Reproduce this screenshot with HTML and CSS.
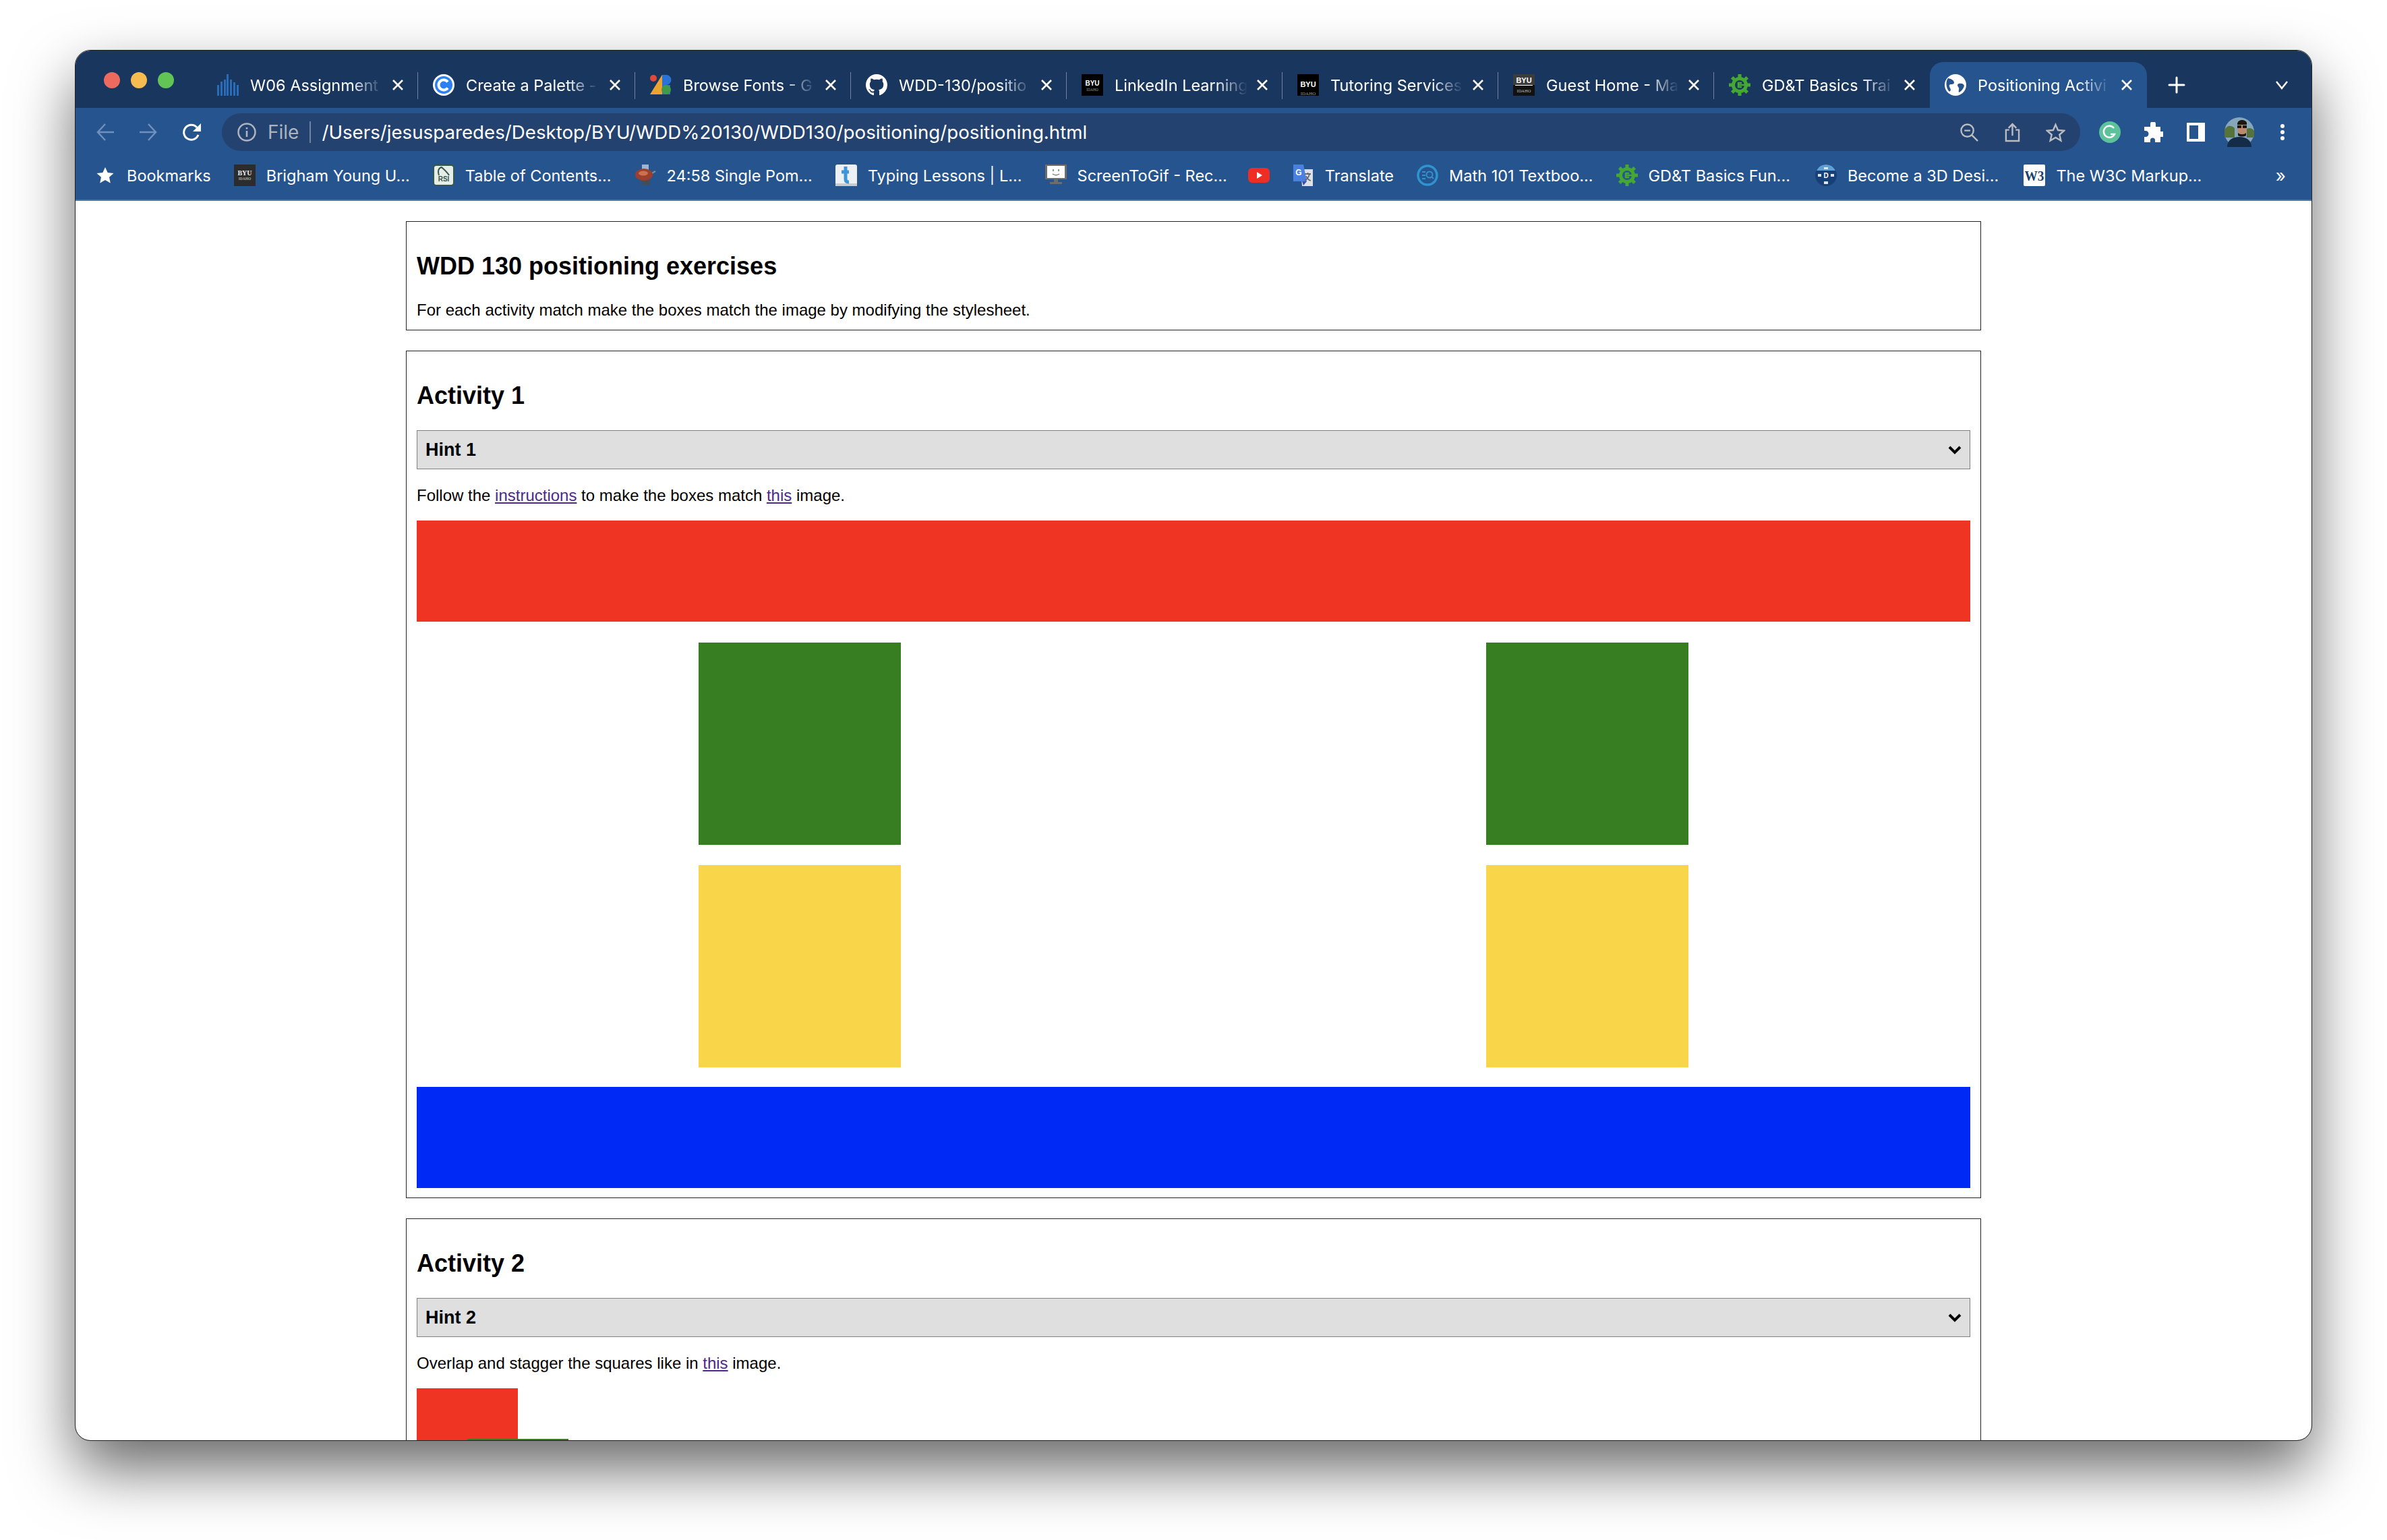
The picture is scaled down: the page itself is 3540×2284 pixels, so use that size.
FILE: index.html
```html
<!DOCTYPE html>
<html lang="en">
<head>
  <meta charset="UTF-8">
  <title>Positioning Activities</title>
  <link rel="stylesheet" href="styles.css">
</head>
<body>
  <svg class="defs" width="0" height="0">
    <symbol id="gear" viewBox="0 0 32 32">
      <path fill="#45a832" fill-rule="evenodd" d="M16 4a12 12 0 1 0 0 24 12 12 0 0 0 0-24zm0 5a7 7 0 1 1 0 14 7 7 0 0 1 0-14z"/>
      <path stroke="#45a832" stroke-width="5" d="M16 0v6M16 26v6M0 16h6M26 16h6M4.700 4.700l4 4M23.300 23.300l4 4M4.700 27.300l4-4M23.300 8.700l4-4"/>
      <path fill="none" stroke="#45a832" stroke-width="2.500" d="M19 13h-5v6h5M14 16h13"/>
    </symbol>
    <symbol id="close" viewBox="0 0 16 16">
      <path fill="none" stroke="#fff" stroke-width="2.600" d="M1 1l14 14M15 1 1 15"/>
    </symbol>
  </svg>

  <div class="window">

    <!-- tab strip -->
    <div class="tabstrip">
      <div class="lights">
        <span class="light red"></span>
        <span class="light yellow"></span>
        <span class="light green"></span>
      </div>
      <div class="tab">
        <svg class="fav" viewBox="0 0 32 32"><path fill="#2b6cb8" d="M0 16h3v16H0zM5 11h3v21H5zM10 8h3v24h-3zM14 0h3v32h-3zM19 8h3v24h-3zM24 12h3v20h-3zM29 16h3v16h-3z"/></svg>
        <span class="tab-title">W06 Assignment</span>
        <svg class="tab-x"><use href="#close"/></svg>
      </div>
      <div class="tab tab-wide">
        <svg class="fav" viewBox="0 0 32 32"><circle cx="16" cy="16" r="16" fill="#fff"/><circle cx="16" cy="16" r="13" fill="#2a80f4"/><path fill="none" stroke="#fff" stroke-width="4" d="M22 11.500a7.500 7.500 0 1 0 0 9"/></svg>
        <span class="tab-title">Create a Palette -</span>
        <svg class="tab-x"><use href="#close"/></svg>
      </div>
      <div class="tab">
        <svg class="fav" viewBox="0 0 32 32"><circle cx="5" cy="6" r="5" fill="#e0483c"/><path fill="#eda331" d="M0 30 18 1v29z"/><path fill="#2a72d8" d="M18 1h6a7.500 7.500 0 0 1 0 15h6v14H18z"/><circle cx="24" cy="23" r="7" fill="#3f9a4a"/></svg>
        <span class="tab-title">Browse Fonts - G</span>
        <svg class="tab-x"><use href="#close"/></svg>
      </div>
      <div class="tab">
        <svg class="fav" viewBox="0 0 16 16"><path fill="#fff" d="M8 0C3.580 0 0 3.580 0 8c0 3.540 2.290 6.530 5.470 7.590.4.070.55-.17.55-.38 0-.19-.01-.82-.01-1.490-2.010.370-2.530-.49-2.690-.94-.09-.23-.48-.94-.82-1.130-.28-.15-.68-.52-.01-.53.630-.01 1.080.58 1.230.82.720 1.210 1.870.870 2.330.660.070-.52.280-.87.510-1.070-1.780-.2-3.640-.89-3.640-3.950 0-.87.310-1.590.820-2.150-.08-.2-.36-1.020.08-2.120 0 0 .67-.21 2.200.820.640-.18 1.320-.27 2-.27s1.360.09 2 .27c1.530-1.040 2.200-.82 2.200-.82.440 1.100.16 1.920.08 2.120.51.560.82 1.270.82 2.150 0 3.070-1.870 3.750-3.650 3.950.29.250.54.730.54 1.480 0 1.070-.01 1.930-.01 2.200 0 .21.150.46.550.38A8.010 8.010 0 0 0 16 8c0-4.420-3.580-8-8-8z"/></svg>
        <span class="tab-title">WDD-130/positio</span>
        <svg class="tab-x"><use href="#close"/></svg>
      </div>
      <div class="tab">
        <svg class="fav" viewBox="0 0 32 32"><rect width="32" height="32" fill="#000"/><text class="fav-bold" x="16" y="17" font-size="10">BYU</text><text class="fav-thin" x="16" y="25" font-size="5.500" fill="#999">IDAHO</text></svg>
        <span class="tab-title">LinkedIn Learning</span>
        <svg class="tab-x"><use href="#close"/></svg>
      </div>
      <div class="tab">
        <svg class="fav" viewBox="0 0 32 32"><rect width="32" height="32" fill="#000"/><text class="fav-bold" x="16" y="19" font-size="11">BYU</text><text class="fav-thin" x="16" y="31" font-size="7" fill="#999">IDAHO</text></svg>
        <span class="tab-title">Tutoring Services</span>
        <svg class="tab-x"><use href="#close"/></svg>
      </div>
      <div class="tab">
        <svg class="fav" viewBox="0 0 32 32"><rect width="32" height="32" fill="#111"/><rect width="32" height="16" fill="#3c3c3c"/><text class="fav-bold" x="16" y="13" font-size="11">BYU</text><rect x="3" y="16" width="26" height="1" fill="#fff"/><text class="fav-thin" x="16" y="27" font-size="6.500" fill="#bbb">IDAHO</text></svg>
        <span class="tab-title">Guest Home - Ma</span>
        <svg class="tab-x"><use href="#close"/></svg>
      </div>
      <div class="tab">
        <svg class="fav" viewBox="0 0 32 32"><use href="#gear"/></svg>
        <span class="tab-title">GD&amp;T Basics Trai</span>
        <svg class="tab-x"><use href="#close"/></svg>
      </div>
      <div class="tab tab-active">
        <svg class="fav" viewBox="0 0 32 32"><circle cx="16" cy="16" r="16" fill="#fff"/><path fill="#25548f" d="M5 6c5 1 9 3 9 7-1 3-5 1-7 3-1 3 2 4 2 8l-2 2C2 21 1 11 5 6zM21 14c4-1 7 0 8 3-1 5-5 9-8 10-1-3 1-5 0-7-2-2-3-5 0-6z"/></svg>
        <span class="tab-title">Positioning Activi</span>
        <svg class="tab-x"><use href="#close"/></svg>
      </div>
      <svg class="newtab" viewBox="0 0 26 26"><path fill="none" stroke="#fff" stroke-width="3" stroke-linecap="round" d="M13 2v22M2 13h22"/></svg>
      <svg class="tabmenu" viewBox="0 0 20 14"><path fill="none" stroke="#fff" stroke-width="2.500" d="M2 2l8 10 8-10"/></svg>
    </div>

    <!-- toolbar -->
    <div class="toolbar">
      <svg class="nav-ico" viewBox="0 0 26 26"><path fill="none" stroke="#6f8fbd" stroke-width="2.500" d="M26 13H2M13 1 2 13l11 12"/></svg>
      <svg class="nav-ico" viewBox="0 0 26 26"><path fill="none" stroke="#6f8fbd" stroke-width="2.500" d="M0 13h24M13 1l11 12-11 12"/></svg>
      <svg class="nav-ico reload" viewBox="0 0 28 28"><path fill="none" stroke="#fff" stroke-width="3" d="M23 18a11 11 0 1 1-2-11"/><path fill="#fff" d="M27 1v12H15z"/></svg>
      <div class="omnibox">
        <svg class="info" viewBox="0 0 28 28"><circle cx="14" cy="14" r="12.500" fill="none" stroke="#adb4bf" stroke-width="2.500"/><path fill="#adb4bf" d="M12.700 12h2.600v9h-2.600zM12.700 7h2.600v2.600h-2.600z"/></svg>
        <span class="scheme">File</span>
        <span class="omni-sep"></span>
        <span class="url">/Users/jesusparedes/Desktop/BYU/WDD%20130/WDD130/positioning/positioning.html</span>
        <svg class="zoomout" viewBox="0 0 28 28"><circle cx="11" cy="11" r="9.500" fill="none" stroke="#b9bdc2" stroke-width="2.500"/><path stroke="#b9bdc2" stroke-width="2.500" fill="none" d="M6.500 11h9M18 18l9 9"/></svg>
        <svg class="share" viewBox="0 0 24 30"><path fill="none" stroke="#b9bdc2" stroke-width="2.500" d="M7 11H2v17h20V11h-5M12 20V2M6 8l6-6 6 6"/></svg>
        <svg class="star" viewBox="0 0 30 30"><path fill="none" stroke="#b9bdc2" stroke-width="2.500" d="M15 3l3.700 8.400 9.300.9-7 6.100 2.100 9L15 22.700 6.900 27.400 9 18.400 2 12.300l9.300-.9z"/></svg>
      </div>
      <svg class="ext-grammarly" viewBox="0 0 32 32"><circle cx="16" cy="16" r="16" fill="#5dc29a"/><path fill="none" stroke="#fff" stroke-width="2.500" d="M22 10a8.500 8.500 0 1 0 1 9h-6"/></svg>
      <svg class="ext-puzzle" viewBox="0 0 30 30"><path fill="#fff" d="M11 3a4 4 0 0 1 8 0v4h7v7h3a4 4 0 0 1 0 8h-3v8H18v-3a3.500 3.500 0 0 0-7 0v3H2v-8h2a4.500 4.500 0 0 0 0-9H2V7h9z"/></svg>
      <div class="ext-panel"></div>
      <svg class="avatar" viewBox="0 0 44 44">
        <circle cx="22" cy="22" r="22" fill="#86a6bb"/>
        <path fill="#56733c" d="M0 18c5-7 10-6 15-2l0 14H0zM33 17c4-2 8-1 11 3v10H33z"/>
        <path fill="#152c48" d="M4 44c0-10 8-15 18-15s18 5 18 15z"/>
        <ellipse cx="26" cy="18" rx="7" ry="10" fill="#b98c70"/>
        <path fill="#1d1712" d="M19 11c0-5 3-7 7-7s8 2 7 7zM19 12h6v4h-6zM27 12h6v4h-6zM20 23c3 3 9 3 12 0v4c-3 2-9 2-12 0z"/>
      </svg>
      <svg class="menu-dots" viewBox="0 0 10 26"><circle cx="5" cy="4" r="3" fill="#fff"/><circle cx="5" cy="13" r="3" fill="#fff"/><circle cx="5" cy="22" r="3" fill="#fff"/></svg>
    </div>

    <!-- bookmarks -->
    <div class="bookmarks">
      <span class="bm">
        <svg class="bm-star" viewBox="0 0 26 26"><path fill="#fff" d="M13 1l3.700 8 8.800.9-6.500 5.900 1.800 8.700L13 20.100 5.200 24.500 7 15.800.5 9.900 9.300 9z"/></svg>
        Bookmarks
      </span>
      <span class="bm">
        <svg class="fav" viewBox="0 0 32 32"><rect width="32" height="32" fill="#2c2c2c"/><text class="fav-serif" x="16" y="16" font-size="10" fill="#eee">BYU</text><text class="fav-serif" x="16" y="23" font-size="5.500" fill="#aaa">IDAHO</text></svg>
        Brigham Young U...
      </span>
      <span class="bm">
        <svg class="fav" viewBox="0 0 32 32"><rect x="1" y="1" width="30" height="30" rx="4" fill="#e6ece8" stroke="#35574c" stroke-width="2"/><path fill="none" stroke="#35574c" stroke-width="2" d="M9 16C7 10 8 5 13 4c3 3 8 7 11 12"/><text class="fav-bold fav-rsi" x="16" y="25" font-size="10">RSI</text></svg>
        Table of Contents...
      </span>
      <span class="bm">
        <svg class="fav" viewBox="0 0 32 32"><rect x="11" y="0" width="10" height="9" fill="#9db4d2"/><path stroke="#7d8a99" stroke-width="2.500" d="M24 14l7-4"/><rect x="10" y="22" width="13" height="8" fill="#444c58"/><ellipse cx="14" cy="15" rx="13" ry="9" fill="#9c3f2c"/><ellipse cx="13" cy="13" rx="7" ry="3.500" fill="#c9724f"/></svg>
        24:58 Single Pom...
      </span>
      <span class="bm">
        <svg class="fav" viewBox="0 0 32 32"><rect width="32" height="32" rx="3" fill="#eef1f3"/><rect y="28" width="32" height="4" fill="#c7cbce"/><path fill="none" stroke="#3e95d8" stroke-width="5" d="M15 3v19c0 3 2 4 5 4M9 11h11"/></svg>
        Typing Lessons | L...
      </span>
      <span class="bm">
        <svg class="fav" viewBox="0 0 32 32"><rect width="32" height="22" fill="#6d6d6d"/><rect x="3" y="2" width="26" height="18" fill="#fff"/><rect x="13" y="22" width="6" height="5" fill="#6d6d6d"/><rect x="7" y="26" width="18" height="3" fill="#6d6d6d"/><path fill="none" stroke="#777" stroke-width="1.500" d="M12 7v3M20 7v3M11 14c3 2 7 2 10 0"/></svg>
        ScreenToGif - Rec...
      </span>
      <span class="bm bm-yt">
        <svg class="fav" viewBox="0 0 32 32"><rect y="5" width="32" height="22" rx="6" fill="#ee2d24"/><path fill="#fff" d="M13 11l8 5-8 5z"/></svg>
      </span>
      <span class="bm">
        <svg class="fav" viewBox="0 0 32 32"><path fill="#dfe2e5" d="M12 7h18v25H14z"/><path fill="#4a80e0" d="M1 0h15l5 25H1z"/><path fill="#3a4fb0" d="M14 25h7l-5 6z"/><text class="fav-bold" x="9" y="16" font-size="12">G</text><path fill="none" stroke="#667" stroke-width="1.800" d="M18 14h9M22.500 12v2M25 14c-1 5-4 8-7 10M20 17c1 3 4 6 7 7"/></svg>
        Translate
      </span>
      <span class="bm">
        <svg class="fav" viewBox="0 0 32 32"><circle cx="16" cy="16" r="14" fill="none" stroke="#2f93cf" stroke-width="3.500"/><path fill="none" stroke="#2f93cf" stroke-width="2" d="M8 11h5M8 16h5M8 21h5"/><circle cx="19" cy="15" r="4.500" fill="none" stroke="#2f93cf" stroke-width="2"/><path stroke="#2f93cf" stroke-width="2" d="M22 18l3 3"/></svg>
        Math 101 Textboo...
      </span>
      <span class="bm">
        <svg class="fav" viewBox="0 0 32 32"><use href="#gear"/></svg>
        GD&amp;T Basics Fun...
      </span>
      <span class="bm bm-nudge">
        <svg class="fav" viewBox="0 0 32 32"><circle cx="16" cy="16" r="16" fill="#173f78"/><path fill="#5f9fd8" d="M16 0a16 16 0 0 1 14 9H2A16 16 0 0 1 16 0z"/><path fill="#dfe8f0" d="M4 14h5v4H4zM23 14h5v4h-5zM13 25h6v4h-6zM13 4h6v3h-6z"/><text class="fav-bold" x="16" y="20" font-size="10">D</text></svg>
        Become a 3D Desi...
      </span>
      <span class="bm bm-nudge">
        <svg class="fav" viewBox="0 0 32 32"><rect width="32" height="32" rx="2" fill="#fff"/><text class="fav-serif" x="16" y="24" font-size="22" textLength="29" lengthAdjust="spacingAndGlyphs" fill="#17406f">W3</text></svg>
        The W3C Markup...
      </span>
      <span class="bm-more">»</span>
    </div>

    <!-- page -->
    <div class="page">
      <section class="card">
        <h2>WDD 130 positioning exercises</h2>
        <p class="intro">For each activity match make the boxes match the image by modifying the stylesheet.</p>
      </section>

      <section class="card">
        <h2>Activity 1</h2>
        <div class="hint">
          <span>Hint 1</span>
          <svg class="hint-arrow" viewBox="0 0 20 14"><path fill="none" stroke="#000" stroke-width="4" d="M2 3l8 8 8-8"/></svg>
        </div>
        <p>Follow the <a href="#">instructions</a> to make the boxes match <a href="#">this</a> image.</p>
        <div class="bar bar-red"></div>
        <div class="squares">
          <div class="sq sq-green"></div>
          <div class="sq sq-green"></div>
          <div class="sq sq-yellow"></div>
          <div class="sq sq-yellow"></div>
        </div>
        <div class="bar bar-blue"></div>
      </section>

      <section class="card">
        <h2>Activity 2</h2>
        <div class="hint">
          <span>Hint 2</span>
          <svg class="hint-arrow" viewBox="0 0 20 14"><path fill="none" stroke="#000" stroke-width="4" d="M2 3l8 8 8-8"/></svg>
        </div>
        <p>Overlap and stagger the squares like in <a href="#">this</a> image.</p>
        <div class="stagger">
          <div class="st st-red"></div>
          <div class="st st-green"></div>
        </div>
      </section>
    </div>
  </div>
</body>
</html>
```

FILE: styles.css
```css
html, body { margin: 0; height: 2284px; overflow: hidden; background-color: #fff; }
body { padding: 75px 112px 0; box-sizing: border-box; font-family: "Liberation Sans", Arial, sans-serif; }

.window {
  width: 3316px;
  height: 2061px;
  border-radius: 22px;
  overflow: hidden;
  display: flex;
  flex-direction: column;
  background-color: #fff;
  outline: 1px solid #222;
  box-shadow: 0 42px 90px rgba(0, 0, 0, 0.6);
}
.defs { position: absolute; }
.fav { width: 32px; height: 32px; flex: none; }
.fav-bold { font-family: "Liberation Sans", sans-serif; font-weight: bold; fill: #fff; text-anchor: middle; }
.fav-rsi { fill: #35574c; }
.fav-thin { font-family: "Liberation Serif", serif; text-anchor: middle; }
.fav-serif { font-family: "Liberation Serif", serif; font-weight: bold; text-anchor: middle; }

/* tab strip */
.tabstrip {
  height: 85px;
  display: flex;
  align-items: flex-end;
  background-color: #19365f;
  flex: none;
  font-family: Inter, sans-serif;
}
.lights { width: 190px; height: 85px; display: flex; gap: 16px; padding: 32px 0 0 42px; box-sizing: border-box; flex: none; }
.light { width: 24px; height: 24px; border-radius: 50%; }
.red { background-color: #ee6a5f; }
.yellow { background-color: #f5bd4f; }
.green { background-color: #61c454; }
.tab {
  width: 320px;
  height: 68px;
  display: flex;
  align-items: center;
  padding: 0 22px;
  box-sizing: border-box;
  color: #fff;
  font-size: 23.5px;
  position: relative;
  flex: none;
}
.lights + .tab { width: 318px; padding-left: 20px; }
.tab-wide { width: 322px; }
.tab::after {
  content: "";
  position: absolute;
  right: 0;
  top: 15px;
  height: 40px;
  width: 1px;
  background-color: #6f83a0;
}
.tab:nth-child(9)::after, .tab-active::after { display: none; }
.tab-active {
  background-color: #25548f;
  border-radius: 20px 20px 0 0;
  width: 322px;
}
.tab-title {
  flex: 1;
  margin-left: 17px;
  white-space: nowrap;
  -webkit-mask-image: linear-gradient(to right, #000 150px, transparent 197px);
  mask-image: linear-gradient(to right, #000 150px, transparent 197px);
}
.tab-x { width: 16px; height: 16px; flex: none; }
.newtab { width: 26px; height: 26px; margin: 0 0 21px 31px; }
.tabmenu { width: 20px; height: 14px; margin: 0 0 27px 133px; }

/* toolbar */
.toolbar {
  height: 72px;
  display: flex;
  align-items: center;
  background-color: #25548f;
  padding: 0 0 0 31px;
  box-sizing: border-box;
  flex: none;
  font-family: Inter, sans-serif;
}
.nav-ico { width: 26px; height: 26px; margin-right: 38px; flex: none; }
.nav-ico.reload { width: 28px; height: 28px; margin-right: 30px; }
.omnibox {
  width: 2756px;
  height: 56px;
  border-radius: 28px;
  background-color: #23426f;
  display: flex;
  align-items: center;
  padding-left: 23px;
  box-sizing: border-box;
  flex: none;
}
.info { width: 28px; height: 28px; flex: none; }
.scheme { color: #adb4bf; font-size: 28px; margin-left: 17px; }
.omni-sep { width: 2px; height: 32px; background-color: #6f83a0; margin: 0 16px; }
.url { color: #fff; font-size: 27.7px; flex: 1; white-space: nowrap; }
.zoomout { width: 27px; height: 27px; margin-right: 39px; flex: none; }
.share { width: 23px; height: 29px; margin-right: 38px; flex: none; }
.star { width: 29px; height: 29px; margin-right: 22px; flex: none; }
.ext-grammarly { width: 32px; height: 32px; margin-left: 28px; flex: none; }
.ext-puzzle { width: 30px; height: 30px; margin-left: 33px; flex: none; }
.ext-panel { width: 13px; height: 20px; border: 4px solid #fff; border-right-width: 10px; margin-left: 35px; flex: none; }
.avatar { width: 44px; height: 44px; margin-left: 29px; flex: none; }
.menu-dots { width: 10px; height: 26px; margin-left: 37px; flex: none; }

/* bookmarks bar */
.bookmarks {
  height: 66px;
  display: flex;
  align-items: center;
  gap: 34px;
  padding: 0 0 8px 31px;
  box-sizing: border-box;
  background-color: #25548f;
  border-bottom: 2px solid #4f78ab;
  color: #fff;
  font-family: Inter, sans-serif;
  font-size: 23.5px;
  white-space: nowrap;
  flex: none;
}
.bm { display: flex; align-items: center; gap: 16px; flex: none; }
.bm-yt { margin-left: -3px; }
.bm-nudge { margin-left: 3px; }
.bm-star { width: 26px; height: 26px; margin-right: 3px; }
.bm-more { margin-left: auto; margin-right: 38px; font-size: 26px; }

/* page content */
.page {
  flex: 1;
  overflow: hidden;
  padding-top: 30px;
  display: flex;
  flex-direction: column;
  align-items: center;
  gap: 30px;
}
.card {
  width: 2336px;
  box-sizing: border-box;
  border: 1px solid #222;
  padding: 0 15px 14px;
  flex: none;
}
.card h2 { font-size: 36px; line-height: 42px; margin: 45px 0 30px; }
.card p { font-size: 24px; line-height: 28px; margin: 0 0 23px; color: #000; }
.card p.intro { margin: 0 0 1px; }
a { color: #4b2a8c; }

.hint {
  height: 58px;
  box-sizing: border-box;
  border: 1px solid #808080;
  background-color: #dfdfdf;
  font-size: 27px;
  font-weight: bold;
  display: flex;
  align-items: center;
  justify-content: space-between;
  padding: 0 12px;
  margin-bottom: 25px;
}
.hint-arrow { width: 20px; height: 14px; }

.bar { height: 150px; }
.bar-red { background-color: #ef3423; }
.bar-blue { background-color: #0029f5; }
.squares {
  display: grid;
  grid-template-columns: 300px 300px;
  gap: 30px 868px;
  justify-content: center;
  padding: 31px 0 29px;
}
.sq { height: 300px; }
.sq-green { background-color: #377e22; }
.sq-yellow { background-color: #f9d549; }

.stagger { position: relative; height: 300px; }
.st { width: 150px; height: 150px; position: absolute; }
.st-red { left: 0; top: 0; background-color: #ef3423; }
.st-green { left: 75px; top: 75px; background-color: #377e22; }
```
